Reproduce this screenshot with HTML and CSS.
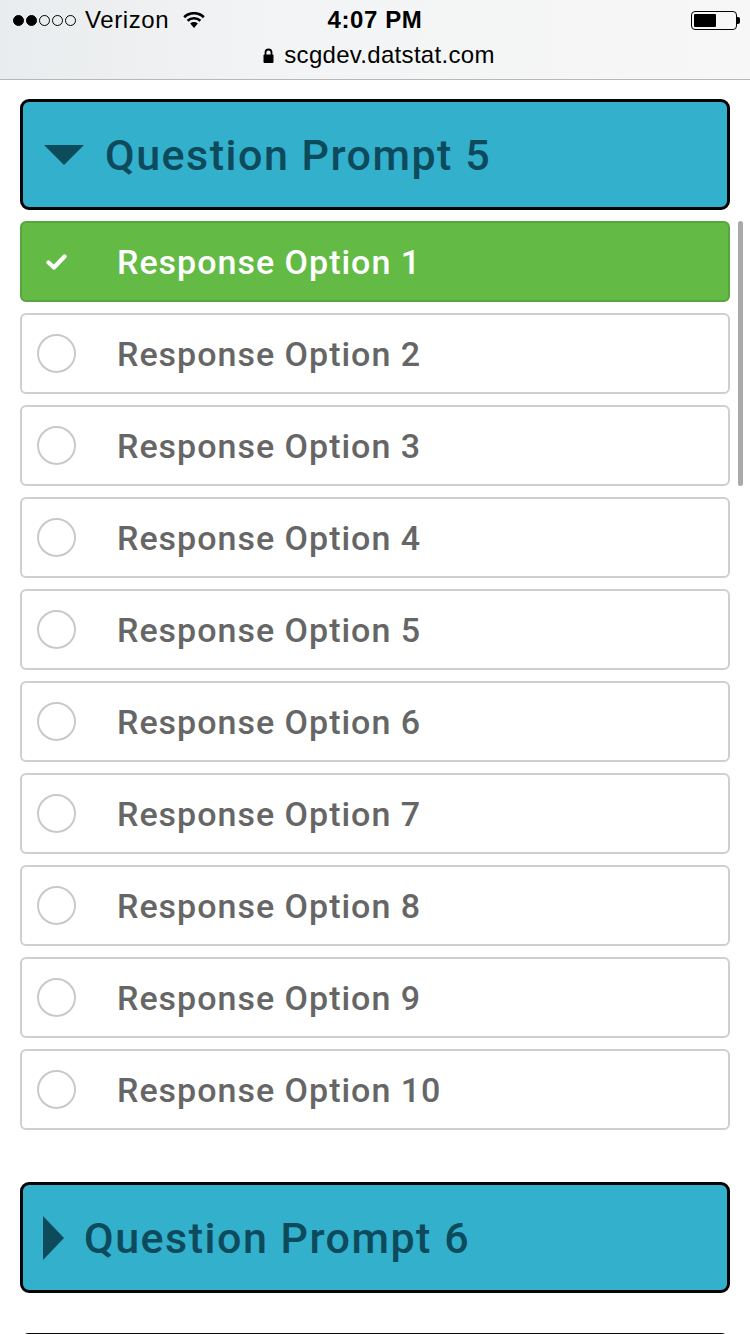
FILE: index.html
```html
<!DOCTYPE html>
<html>
<head>
<meta charset="utf-8">
<link rel="stylesheet" href="styles.css">
</head>
<body>
<div class="chrome">
  <div class="status">
    <div class="carrier">
      <span class="dots"><i class="dot on"></i><i class="dot on"></i><i class="dot"></i><i class="dot"></i><i class="dot"></i></span>
      <span class="carrier-name">Verizon</span>
      <svg class="wifi" width="22" height="16" viewBox="0 0 22 16"><path d="M11 16 L7.2 11.6 A5.6 5.6 0 0 1 14.8 11.6 Z" fill="#000"/><path d="M4.6 8.8 A9.4 9.4 0 0 1 17.4 8.8" stroke="#000" stroke-width="2.6" fill="none"/><path d="M1.2 5.2 A14 14 0 0 1 20.8 5.2" stroke="#000" stroke-width="2.6" fill="none"/></svg>
    </div>
    <div class="time">4:07 PM</div>
    <div class="battery"><span class="batt-body"><span class="batt-fill"></span></span><span class="batt-nub"></span></div>
  </div>
  <div class="url">
    <svg class="lock" width="11" height="15" viewBox="0 0 11 15"><path d="M2.5 7 V4.5 A3 3 0 0 1 8.5 4.5 V7" stroke="#000" stroke-width="1.8" fill="none"/><rect x="0.5" y="6.5" width="10" height="8.5" rx="1" fill="#000"/></svg>
    <span>scgdev.datstat.com</span>
  </div>
</div>

<main class="page">
  <section class="question">
    <div class="q-head">
      <svg class="caret-down" width="40" height="20" viewBox="0 0 40 20"><path d="M0 0 H40 L20 20 Z" fill="#0c4a5c"/></svg>
      <span class="q-title">Question Prompt 5</span>
    </div>
    <div class="options-wrap">
      <ul class="options">
        <li class="option selected">
          <span class="mark"><svg width="21" height="16" viewBox="0 0 21 16"><path d="M2.5 8.5 L8 13.5 L18.5 2.5" stroke="#fff" stroke-width="4.2" fill="none" stroke-linecap="round" stroke-linejoin="round"/></svg></span>
          <span class="label">Response Option 1</span>
        </li>
        <li class="option"><span class="mark"><span class="radio"></span></span><span class="label">Response Option 2</span></li>
        <li class="option"><span class="mark"><span class="radio"></span></span><span class="label">Response Option 3</span></li>
        <li class="option"><span class="mark"><span class="radio"></span></span><span class="label">Response Option 4</span></li>
        <li class="option"><span class="mark"><span class="radio"></span></span><span class="label">Response Option 5</span></li>
        <li class="option"><span class="mark"><span class="radio"></span></span><span class="label">Response Option 6</span></li>
        <li class="option"><span class="mark"><span class="radio"></span></span><span class="label">Response Option 7</span></li>
        <li class="option"><span class="mark"><span class="radio"></span></span><span class="label">Response Option 8</span></li>
        <li class="option"><span class="mark"><span class="radio"></span></span><span class="label">Response Option 9</span></li>
        <li class="option"><span class="mark"><span class="radio"></span></span><span class="label">Response Option 10</span></li>
      </ul>
      <div class="scrollbar"></div>
    </div>
  </section>

  <section class="question">
    <div class="q-head collapsed">
      <svg class="caret-right" width="21" height="44" viewBox="0 0 21 44"><path d="M0 0 L21 22 L0 44 Z" fill="#0c4a5c"/></svg>
      <span class="q-title">Question Prompt 6</span>
    </div>
  </section>

  <section class="question">
    <div class="q-head collapsed"></div>
  </section>
</main>
</body>
</html>
```

FILE: styles.css
```css
* { box-sizing: border-box; }
html, body { margin: 0; padding: 0; }
body {
  width: 750px;
  height: 1334px;
  overflow: hidden;
  background: #fff;
  font-family: Roboto, "Liberation Sans", sans-serif;
}

.chrome {
  height: 80px;
  background: linear-gradient(90deg, #e9ecee 0%, #f3f4f5 40%, #f7f7f7 100%);
  border-bottom: 1px solid #b7b7b7;
  font-family: "Liberation Sans", Roboto, sans-serif;
  color: #000;
}
.status {
  height: 40px;
  display: flex;
  align-items: center;
  justify-content: space-between;
  padding: 0 10px 0 13px;
  position: relative;
}
.carrier {
  display: flex;
  align-items: center;
  gap: 9px;
  font-size: 24px;
}
.dots { display: flex; gap: 2px; margin-right: 0; }
.dot {
  width: 11px; height: 11px;
  border-radius: 50%;
  border: 1px solid #000;
  display: block;
}
.dot.on { background: #000; }
.carrier-name { letter-spacing: 0.6px; }
.wifi { margin-left: 5px; }
.time {
  position: absolute;
  left: 0; right: 0;
  text-align: center;
  font-size: 24px;
  font-weight: 700;
  letter-spacing: 0.6px;
  pointer-events: none;
}
.battery { display: flex; align-items: center; }
.batt-body {
  width: 46px; height: 19px;
  border: 1.5px solid #000;
  border-radius: 4px;
  padding: 2px;
  display: flex;
}
.batt-fill { width: 22px; height: 100%; background: #000; border-radius: 1px; }
.batt-nub { width: 3px; height: 7px; background: #000; border-radius: 0 2px 2px 0; }

.url {
  height: 30px;
  display: flex;
  align-items: center;
  justify-content: center;
  gap: 10px;
  font-size: 24px;
  letter-spacing: 0.3px;
  padding-left: 8px;
}

.page {
  padding: 19px 20px 0 20px;
  display: flex;
  flex-direction: column;
  gap: 40px;
}

.q-head {
  height: 111px;
  background: #33b0cc;
  border: 3px solid #050505;
  border-radius: 9px;
  display: flex;
  align-items: center;
  padding-left: 21px;
  gap: 21px;
  color: #0c4a5c;
}
.q-title {
  font-size: 43px;
  font-weight: 500;
  letter-spacing: 1.5px;
  margin-top: 0;
}
.q-head.collapsed { padding-left: 20px; gap: 20px; height: 111px; }

.options-wrap { position: relative; margin-top: 11px; margin-bottom: 12px; }
.options {
  list-style: none;
  margin: 0;
  padding: 0;
  display: flex;
  flex-direction: column;
  gap: 11px;
}
.option {
  height: 81px;
  border: 2px solid #cfcfcf;
  border-radius: 6px;
  display: flex;
  align-items: center;
  color: #666;
  background: #fff;
}
.option.selected {
  background: #63bb46;
  border-color: #58a53f;
  color: #fff;
}
.mark {
  width: 95px;
  padding-left: 15px;
  display: flex;
  align-items: center;
}
.option.selected .mark { padding-left: 24px; }
.radio {
  width: 39px; height: 39px;
  border: 2px solid #c9c9c9;
  border-radius: 50%;
  display: block;
}
.label {
  font-size: 34px;
  font-weight: 500;
  letter-spacing: 1px;
}

.scrollbar {
  position: absolute;
  right: -13px;
  top: 0;
  width: 5px;
  height: 265px;
  background: #a9a9a9;
  border-radius: 3px;
}
```
